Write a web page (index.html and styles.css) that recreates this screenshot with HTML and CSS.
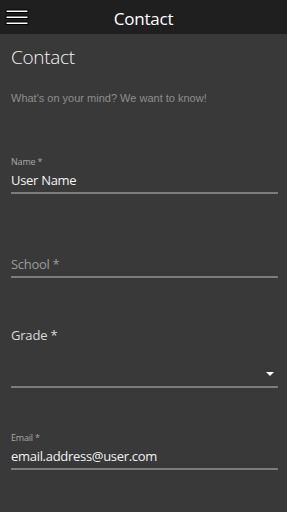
FILE: index.html
```html
<!DOCTYPE html>
<html lang="en">
  <head>
    <meta charset="UTF-8" />
    <meta name="viewport" content="width=device-width, initial-scale=1.0" />
    <title>Contact</title>
    <link rel="stylesheet" href="styles.css">
  </head>
  <body>
    <header class="topbar">
      <button class="menu-btn" aria-label="Menu">
        <svg width="24" height="17" viewBox="0 0 24 17">
          <rect x="1" y="1" width="22" height="2.5" fill="#fff" stroke="#000" stroke-width="1" />
          <rect x="1" y="7" width="22" height="2.5" fill="#fff" stroke="#000" stroke-width="1" />
          <rect x="1" y="13" width="22" height="2.5" fill="#fff" stroke="#000" stroke-width="1" />
        </svg>
      </button>
      <div class="topbar-title">Contact</div>
      <div class="topbar-spacer"></div>
    </header>

    <main class="content">
      <h1>Contact</h1>
      <p class="description">What's on your mind? We want to know!</p>

      <div class="field field-name">
        <label for="name">Name *</label>
        <input type="text" id="name" value="User Name" />
      </div>

      <div class="field field-school">
        <label for="school" class="hidden-label">School *</label>
        <input type="text" id="school" placeholder="School *" />
      </div>

      <div class="field field-grade">
        <label class="big-label">Grade *</label>
        <div class="select">
          <span class="arrow"></span>
        </div>
      </div>

      <div class="field field-email">
        <label for="email">Email *</label>
        <input type="text" id="email" value="email.address@user.com" />
      </div>
    </main>
  </body>
</html>
```

FILE: styles.css
```css
* {
  box-sizing: border-box;
  margin: 0;
  padding: 0;
}

body {
  font-family: "Open Sans", sans-serif;
  background-color: #393939;
  color: #f2f2f2;
  width: 287px;
  height: 512px;
  overflow: hidden;
}

.topbar {
  display: flex;
  align-items: center;
  height: 34px;
  background-color: #1f1f1f;
}

.menu-btn {
  width: 34px;
  height: 34px;
  border: none;
  background: none;
  display: flex;
  align-items: flex-start;
  padding: 9px 0 0 5px;
}

.topbar-title {
  flex: 1;
  text-align: center;
  font-size: 17px;
  letter-spacing: -0.2px;
  padding-top: 2px;
  color: #fff;
}

.topbar-spacer {
  width: 34px;
}

.content {
  padding: 0 9px 0 11px;
}

h1 {
  font-size: 19px;
  font-weight: 300;
  line-height: 24px;
  letter-spacing: -0.3px;
  margin-top: 11px;
  color: #f4f4f4;
}

.description {
  font-family: "Liberation Sans", Arial, sans-serif;
  font-size: 11px;
  line-height: 13px;
  color: #8e8e8e;
  margin-top: 23px;
}

.field label {
  display: block;
  font-size: 9px;
  line-height: 12px;
  letter-spacing: -0.2px;
  color: #a8a8a8;
  margin-bottom: 3px;
}

.field input {
  display: block;
  width: 100%;
  font-family: "Open Sans", sans-serif;
  font-size: 13px;
  line-height: 18px;
  letter-spacing: -0.3px;
  height: 23px;
  padding: 0 0 3px;
  border: none;
  border-bottom: 2px solid #7c7c7c;
  background: transparent;
  color: #f2f2f2;
  outline: none;
}

.field input::placeholder {
  color: #9c9c9c;
}

.field-name {
  margin-top: 51px;
}

.field-school {
  margin-top: 46px;
}

.hidden-label {
  visibility: hidden;
}

.field-grade {
  margin-top: 48px;
}

.field .big-label {
  font-size: 13px;
  line-height: 18px;
  letter-spacing: -0.2px;
  color: #dcdcdc;
  margin-bottom: 0;
}

.select {
  display: flex;
  justify-content: flex-end;
  align-items: flex-end;
  height: 44px;
  padding: 0 4px 10px 0;
  border-bottom: 2px solid #7c7c7c;
}

.arrow {
  width: 0;
  height: 0;
  border-left: 4px solid transparent;
  border-right: 4px solid transparent;
  border-top: 4px solid #fff;
}

.field-email {
  margin-top: 44px;
}
```
